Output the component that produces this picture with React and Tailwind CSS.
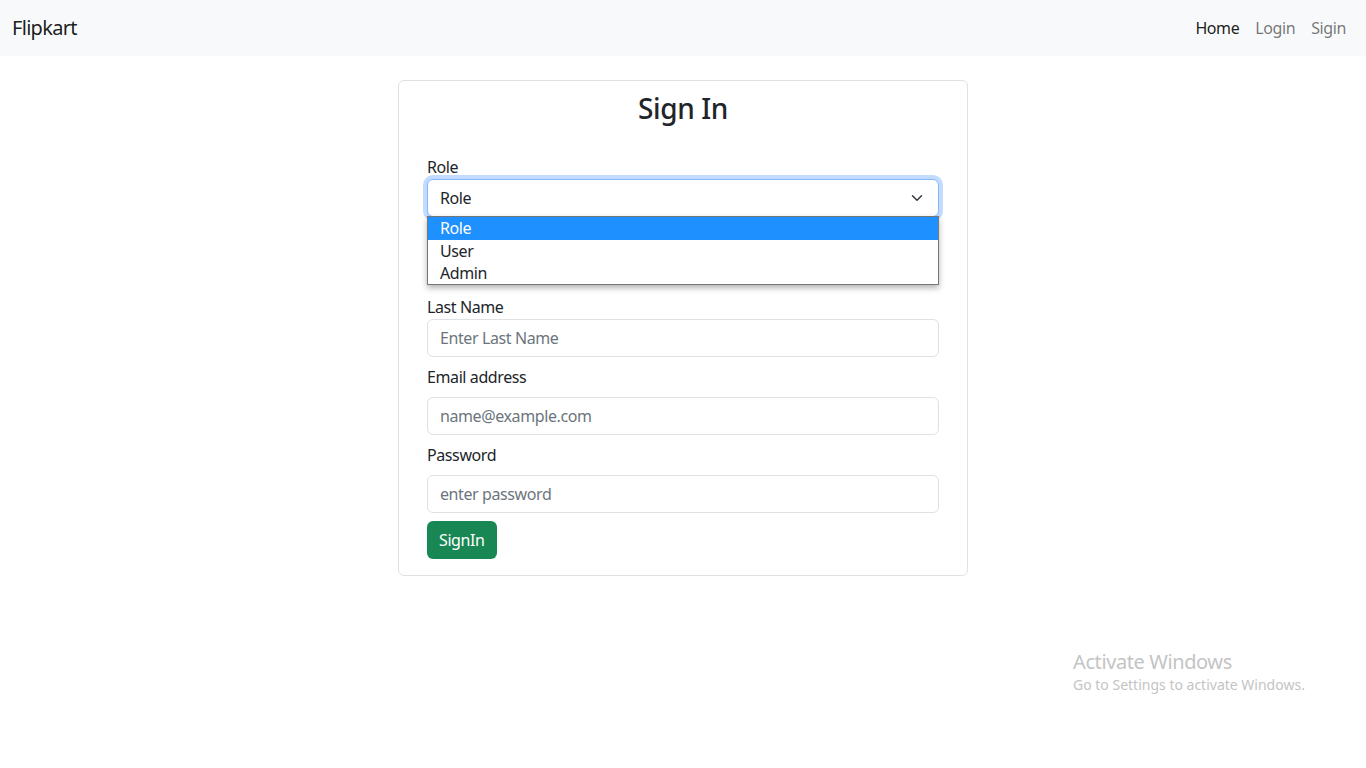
const font = { fontFamily: '"Noto Sans", "Open Sans", sans-serif' };

const Field = ({ label, placeholder, type = 'text', gapLabel = false, hidden = false }) => (
  <div className={`mb-2 ${hidden ? 'invisible' : ''}`}>
    <label className={`block text-[16px] leading-6 text-[#212529] ${gapLabel ? 'mb-2' : ''}`}>{label}</label>
    <input
      type={type}
      placeholder={placeholder}
      className="block w-full h-[38px] px-3 text-[16px] tracking-[-0.025em] text-[#212529] bg-white border border-[#dee2e6] rounded-[6px] outline-none placeholder:text-[#6c757d]"
    />
  </div>
);

const App = () => {
  return (
    <div className="min-h-[768px] bg-white relative tracking-[-0.025em]" style={font}>
      {/* Navbar */}
      <nav className="h-14 bg-[#f8f9fa] flex items-center justify-between pl-3 pr-3">
        <a className="text-[20px] tracking-[-0.035em] text-[rgba(0,0,0,0.9)]">Flipkart</a>
        <div className="flex items-center text-[16px]">
          <a className="px-2 text-[rgba(0,0,0,0.9)]">Home</a>
          <a className="px-2 text-[rgba(0,0,0,0.55)]">Login</a>
          <a className="px-2 text-[rgba(0,0,0,0.55)]">Sigin</a>
        </div>
      </nav>

      {/* Card */}
      <div className="w-[570px] mx-auto mt-6 border border-[#dee2e6] rounded-[6px] px-[28px] pt-[8px] pb-[16px]">
        <h2 className="text-center text-[28px] font-medium leading-[38px] text-[#212529] mb-[28px]">Sign In</h2>

        <div className="mb-2 relative">
          <label className="block text-[16px] leading-6 text-[#212529]">Role</label>
          <div className="relative h-[38px] border border-[#86b7fe] rounded-[6px] bg-white shadow-[0_0_0_4px_rgba(13,110,253,0.25)] flex items-center justify-between px-3">
            <span className="text-[16px] text-[#212529]">Role</span>
            <svg width="16" height="12" viewBox="0 0 16 16" className="mr-[1px]">
              <path d="m2 5 6 6 6-6" fill="none" stroke="#343a40" strokeWidth="2" strokeLinecap="round" strokeLinejoin="round" />
            </svg>
          </div>
          {/* open native dropdown */}
          <div className="absolute left-0 right-0 top-[61px] z-10 bg-white border border-[#767676] shadow-[0_3px_6px_rgba(0,0,0,0.3)] text-[16px] leading-[22px]">
            <div className="bg-[#1e90ff] text-white px-3 h-[23px]">Role</div>
            <div className="text-[#212529] px-3">User</div>
            <div className="text-[#212529] px-3">Admin</div>
          </div>
        </div>

        <Field label="First Name" placeholder="Enter First Name" hidden />
        <Field label="Last Name" placeholder="Enter Last Name" />
        <Field label="Email address" placeholder="name@example.com" type="email" gapLabel />
        <Field label="Password" placeholder="enter password" type="password" gapLabel />

        <button className="h-[38px] px-3 bg-[#198754] text-white text-[16px] rounded-[6px]">SignIn</button>
      </div>

      {/* Windows watermark */}
      <div className="absolute left-[1073px] top-[649px] pointer-events-none text-[#c4c4c4]">
        <div className="text-[20px] leading-[26px]">Activate Windows</div>
        <div className="text-[14px] leading-[20px] tracking-normal">Go to Settings to activate Windows.</div>
      </div>
    </div>
  );
};

export default App;
